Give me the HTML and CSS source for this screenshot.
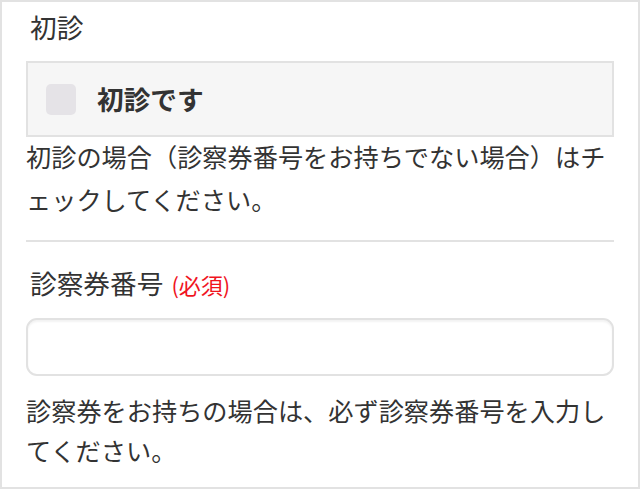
FILE: index.html
```html
<!DOCTYPE html>
<html lang="ja">
<head>
<meta charset="utf-8">
<title>初診</title>
<link rel="stylesheet" href="styles.css">
</head>
<body>
<div class="frame">
  <div class="field">
    <div class="label">初診</div>
    <label class="check-box">
      <span class="check"></span>
      <span class="check-text">初診です</span>
    </label>
    <p class="note note-first">初診の場合（診察券番号をお持ちでない場合）はチェックしてください。</p>
  </div>
  <hr class="divider">
  <div class="field">
    <div class="label label-second">診察券番号<span class="required">(必須)</span></div>
    <div class="input"></div>
    <p class="note note-second">診察券をお持ちの場合は、必ず診察券番号を入力してください。</p>
  </div>
</div>
</body>
</html>
```
FILE: styles.css
```css
html, body {
  margin: 0;
  padding: 0;
  background: #ffffff;
}
body {
  font-family: "Noto Sans CJK JP", "Noto Sans", sans-serif;
  color: #333333;
}
.frame {
  width: 640px;
  height: 489px;
  box-sizing: border-box;
  border: 2px solid #e2e2e2;
  padding: 5px 24px 0 24px;
  overflow: hidden;
}
.label {
  font-size: 26.7px;
  line-height: 40px;
  height: 40px;
  padding-left: 4px;
  color: #333333;
}
.check-box {
  margin-top: 14px;
  height: 76px;
  box-sizing: border-box;
  border: 2px solid #e2e2e2;
  background: #f6f6f6;
  display: flex;
  align-items: center;
  padding-left: 18px;
}
.check {
  width: 30px;
  height: 31px;
  border-radius: 5px;
  background: #e5e3e7;
  flex: none;
}
.check-text {
  margin-left: 21px;
  font-size: 26.7px;
  font-weight: bold;
  color: #333333;
  line-height: 1;
}
.note {
  margin: 0;
  font-size: 25.2px;
  color: #333333;
}
.note-first {
  margin-top: -2px;
  line-height: 43px;
}
.divider {
  margin: 19px 0 0 0;
  border: 0;
  height: 2px;
  background: #e2e2e2;
}
.label-second {
  margin-top: 21px;
}
.required {
  margin-left: 8px;
  font-size: 22px;
  line-height: 1;
  color: #f0141e;
}
.input {
  margin-top: 15px;
  height: 58px;
  box-sizing: border-box;
  border: 2px solid #e2e2e2;
  border-radius: 11px;
  background: #ffffff;
  box-shadow: inset 0 2px 2px rgba(0, 0, 0, 0.05);
}
.note-second {
  margin-top: 14px;
  line-height: 40px;
}
```
